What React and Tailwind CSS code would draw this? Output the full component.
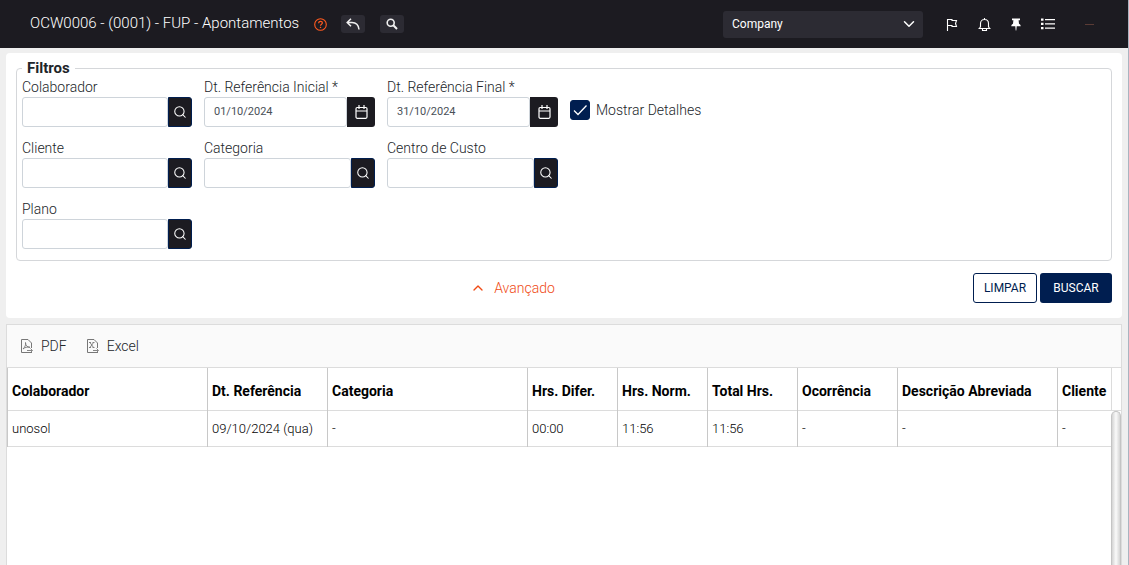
import { useState } from 'react'
import { Search, ChevronDown, ChevronUp } from 'lucide-react'

const COLUNAS = [
    { id: 'colaborador', label: 'Colaborador', largura: 'w-[200px]' },
    { id: 'data', label: 'Dt. Referência', largura: 'w-[120px]' },
    { id: 'categoria', label: 'Categoria', largura: 'w-[200px]' },
    { id: 'difer', label: 'Hrs. Difer.', largura: 'w-[90px]' },
    { id: 'norm', label: 'Hrs. Norm.', largura: 'w-[90px]' },
    { id: 'total', label: 'Total Hrs.', largura: 'w-[90px]' },
    { id: 'ocorrencia', label: 'Ocorrência', largura: 'w-[100px]' },
    { id: 'descricao', label: 'Descrição Abreviada', largura: 'w-[160px]' },
    { id: 'cliente', label: 'Cliente', largura: '' },
]

const LINHAS = [
    {
        colaborador: 'unosol', data: '09/10/2024 (qua)', categoria: '-', difer: '00:00', norm: '11:56',
        total: '11:56', ocorrencia: '-', descricao: '-', cliente: '-',
    },
]

function IconeAjuda() {
    return (
        <svg viewBox="0 0 13 13" className="w-[13px] h-[13px]" fill="none" stroke="#ff5a1f">
            <circle cx="6.5" cy="6.5" r="5.8" strokeWidth="1.1" />
            <path d="M4.7 5.2c0-2.5 3.7-2.3 3.7-.1 0 1.2-1.9 1.2-1.9 2.6" strokeWidth="1.2" />
            <path d="M6.5 8.8v1.2" strokeWidth="1.3" />
        </svg>
    )
}

function IconeVoltar() {
    return (
        <svg viewBox="0 0 14 12" className="w-[14px] h-3" fill="none" stroke="#f1f1f1" strokeWidth="1.5">
            <path d="M5 .8 1.2 4.5l3.800 3.700M1.400 4.500H6c4 0 6.500 2.500 7 7" />
        </svg>
    )
}

function IconeLupa() {
    return (
        <svg viewBox="0 0 12 12" className="w-3 h-3" fill="none" stroke="#f1f1f1">
            <circle cx="4.7" cy="4.7" r="3.5" strokeWidth="1.6" />
            <path d="M7.3 7.3 11 11" strokeWidth="2" />
        </svg>
    )
}

function IconeBandeira() {
    return (
        <svg viewBox="0 0 12 13" className="w-3 h-[13px]" fill="none" stroke="white">
            <path d="M1.5 13V1.5H6V2.5H10.500L9.500 5.500 10.500 8.500H6V7.500H1.500" strokeWidth="1.1" />
        </svg>
    )
}

function IconeSino() {
    return (
        <svg viewBox="0 0 13 13" className="w-[13px] h-[13px]" fill="none" stroke="white" strokeWidth="1.1">
            <path d="M6.500 0v1.500M.5 10.500h12M1.500 10.500 2.500 8.500V5.500C2.500 3 4.200 1.500 6.500 1.500S10.500 3 10.500 5.500V8.500L11.500 10.500M4.500 10.500v2h4v-2" />
        </svg>
    )
}

function IconePino() {
    return (
        <svg viewBox="0 0 10 13" className="w-[10px] h-[13px]" fill="white">
            <path d="M1 .5h8v1.800H7.600l.4 3.500c1.100.6 1.700 1.400 1.700 2.400H.3c0-1 .6-1.800 1.700-2.400l.4-3.500H1zM4.300 8.200h1.400L5.300 12.500h-.6z" />
        </svg>
    )
}

function IconeLista() {
    return (
        <svg viewBox="0 0 14 12" className="w-[14px] h-3" fill="white">
            <path d="M0 .5h2.500v2.200H0zM0 4.800h2.500v2.200H0zM0 9h2.500v2.200H0zM4 1h10v1.300H4zM4 5.300h10v1.300H4zM4 9.500h10v1.300H4z" />
        </svg>
    )
}

function IconeCalendario() {
    return (
        <svg viewBox="0 0 13 14" className="w-[13px] h-[14px]" fill="none" stroke="white" strokeWidth="1.2">
            <rect x="1" y="2.5" width="11" height="10.8" rx="1.2" />
            <path d="M1 6h11M4 0v4M9 0v4" />
        </svg>
    )
}

function IconeArquivo({ tipo }) {
    return (
        <svg viewBox="0 0 13 15" className="w-[13px] h-[15px]" fill="none" stroke="#777">
            <path d="M12 13.500H1.500V.5H8L11.500 4v5" />
            <path d="M7 11.500h5M10.500 9.500l2 2-2 2" strokeWidth=".9" />
            {tipo === 'pdf'
                ? <path d="M3 10C5 8 6 6 5.500 3.500 5.500 6.500 7 8 10 8.300 7 7.800 5 8.300 3 10" strokeWidth=".9" />
                : <path d="M3 3.500h2M6.500 3.500h2M3 8.500h2M6.500 8.500h2M4 3.500l3.500 5M7.500 3.500l-3.500 5" strokeWidth=".9" />}
        </svg>
    )
}

function Campo({ id, label, valor, data }) {
    return (
        <div>
            <label htmlFor={id} className="block h-5 leading-5">{label}</label>
            <div className="flex h-[30px]">
                <input id={id} type="text" defaultValue={valor}
                    className="flex-1 min-w-0 border border-[#ced4da] rounded-[3px] px-[9px] text-[11px] font-normal text-[#495057] focus:outline-none" />
                {data ? (
                    <button type="button" aria-label="Abrir calendário" className="w-7 bg-[#1c1b21] rounded-r-[3px] flex items-center justify-center">
                        <IconeCalendario />
                    </button>
                ) : (
                    <button type="button" aria-label={`Pesquisar ${label}`} className="w-6 bg-[#1c1b21] border border-[#001e50] text-white rounded-r-[3px] flex items-center justify-center">
                        <Search size={14} strokeWidth={1.8} />
                    </button>
                )}
            </div>
        </div>
    )
}

function Cabecalho() {
    return (
        <header className="h-12 bg-[#1c1b21] text-white flex items-center pl-[30px] pr-[34px]">
            <h1 className="text-[15px] mr-[15px]">OCW0006 - (0001) - FUP - Apontamentos</h1>
            <button type="button" aria-label="Ajuda" className="mr-[14px]"><IconeAjuda /></button>
            <button type="button" aria-label="Voltar" className="w-6 h-[18px] bg-[#2c2b33] rounded-[3px] flex items-center justify-center mr-[15px]"><IconeVoltar /></button>
            <button type="button" aria-label="Pesquisar" className="w-6 h-[18px] bg-[#2c2b33] rounded-[3px] flex items-center justify-center">
                <IconeLupa />
            </button>
            <div className="relative ml-auto mr-[23px]">
                <select aria-label="Empresa" className="appearance-none block w-[200px] h-[27px] bg-[#2c2b33] rounded-[3px] pl-[9px] text-xs font-normal">
                    <option>Company</option>
                </select>
                <ChevronDown size={18} className="absolute right-[5px] top-1 pointer-events-none" />
            </div>
            <div className="flex items-center gap-5">
                <button type="button" aria-label="Marcadores"><IconeBandeira /></button>
                <button type="button" aria-label="Notificações"><IconeSino /></button>
                <button type="button" aria-label="Fixar"><IconePino /></button>
                <button type="button" aria-label="Menu"><IconeLista /></button>
            </div>
            <div className="w-[9px] h-px bg-[#5a3b35] ml-[30px]" />
        </header>
    )
}

function Filtros() {
    const [detalhes, setDetalhes] = useState(true)

    return (
        <form className="bg-white rounded-[4px] px-[10px] pt-[5px] pb-[15px]" onSubmit={e => e.preventDefault()}>
            <fieldset className="border border-[#d5d7da] rounded-[4px] px-[5px] pb-[11px]">
                <legend className="px-[5px] text-[15px] leading-5 font-bold">Filtros</legend>
                <div className="flex gap-3 -mt-[1px]">
                    <div className="grid grid-cols-[170px_171px_171px] gap-x-3 gap-y-[11px]">
                        <Campo id="colaborador" label="Colaborador" />
                        <Campo id="inicial" label="Dt. Referência Inicial *" valor="01/10/2024" data />
                        <Campo id="final" label="Dt. Referência Final *" valor="31/10/2024" data />
                        <Campo id="cliente" label="Cliente" />
                        <Campo id="categoria" label="Categoria" />
                        <Campo id="custo" label="Centro de Custo" />
                        <Campo id="plano" label="Plano" />
                    </div>
                    <label className="flex items-center gap-[6px] h-5 mt-[23px]">
                        <span className="relative flex">
                            <input type="checkbox" checked={detalhes} onChange={e => setDetalhes(e.target.checked)}
                                className="appearance-none w-5 h-5 rounded-[3px] border border-[#001e50] checked:bg-[#001e50]" />
                            {detalhes && (
                                <svg viewBox="0 0 20 20" className="absolute inset-0 pointer-events-none" fill="none" stroke="white" strokeWidth="1.3">
                                    <path d="M4 10.500l4 4 8.500-9" />
                                </svg>
                            )}
                        </span>
                        Mostrar Detalhes
                    </label>
                </div>
            </fieldset>
            <div className="flex items-center mt-3">
                <div className="flex-1 flex justify-center pl-9">
                    <button type="button" className="flex items-center gap-2 text-[#f04a14]">
                        <ChevronUp size={16} /> Avançado
                    </button>
                </div>
                <div className="flex gap-[3px] text-xs font-normal">
                    <button type="reset" className="w-16 h-[30px] border border-[#001e50] text-[#001e50] rounded-[3px]">LIMPAR</button>
                    <button type="submit" className="w-[72px] h-[30px] bg-[#001e50] text-white rounded-[3px]">BUSCAR</button>
                </div>
            </div>
        </form>
    )
}

function Tabela() {
    return (
        <section className="flex-1 flex flex-col bg-white border border-b-0 border-[#dcdcdc]">
            <div className="h-[42px] bg-[#fafafa] flex items-center gap-[19px] pl-[13px]">
                <button type="button" className="flex items-center gap-2"><IconeArquivo tipo="pdf" /> PDF</button>
                <button type="button" className="flex items-center gap-2"><IconeArquivo tipo="excel" /> Excel</button>
            </div>
            <div className="flex-1 flex border-t border-[#dcdcdc]">
                <div className="flex-1 min-w-0 overflow-hidden">
                    <table className="w-full table-fixed border-collapse text-[13px] text-black">
                        <thead>
                            <tr className="h-[42px] border-b border-[#dcdcdc] text-sm">
                                {COLUNAS.map(c => (
                                    <th key={c.id} className={`${c.largura} border-l border-[#c8c8c8] px-1 pt-1 text-left font-bold whitespace-nowrap`}>{c.label}</th>
                                ))}
                            </tr>
                        </thead>
                        <tbody>
                            {LINHAS.map(l => (
                                <tr key={l.colaborador} className="h-9 border-b border-[#dcdcdc]">
                                    {COLUNAS.map(c => (
                                        <td key={c.id} className="border-l border-[#c8c8c8] px-1 pt-[2px] whitespace-nowrap">{l[c.id]}</td>
                                    ))}
                                </tr>
                            ))}
                        </tbody>
                    </table>
                </div>
                {/* Barra de rolagem */}
                <div className="w-[10px] flex flex-col">
                    <div className="h-[43px] border-l border-b border-[#dcdcdc]" />
                    <div className="flex-1 rounded-t-full border border-b-0 border-[#c4c4c4] bg-linear-to-r from-[#d4d4d4] via-[#fafafa] to-[#d4d4d4]" />
                </div>
            </div>
        </section>
    )
}

export default function App() {
    return (
        <div className="min-h-screen flex flex-col bg-[#efefef] border-r border-[#a9b4c0] font-['Roboto',sans-serif] font-light text-sm text-[#212529]">
            <Cabecalho />
            <main className="flex-1 flex flex-col gap-[6px] pt-[5px] px-[6px]">
                <Filtros />
                <Tabela />
            </main>
        </div>
    )
}
